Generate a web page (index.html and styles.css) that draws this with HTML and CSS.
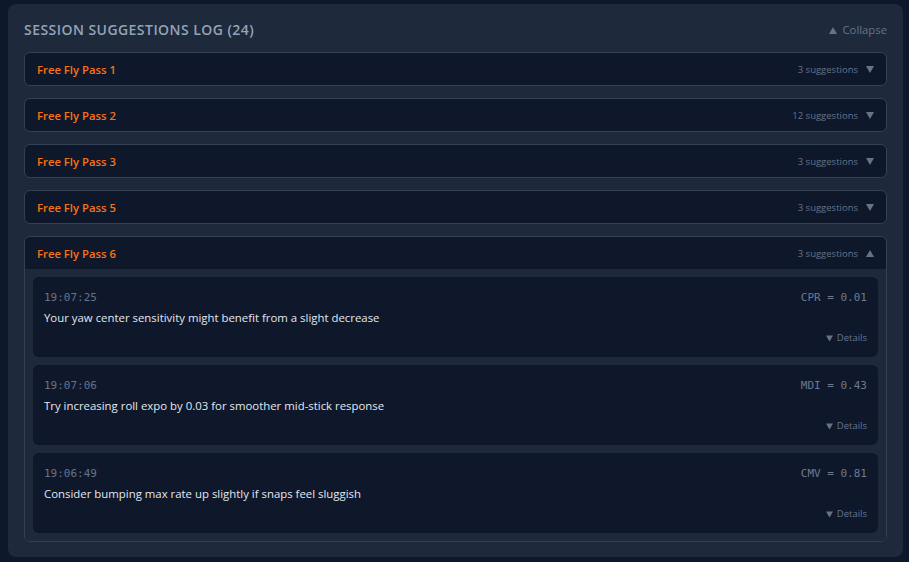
FILE: index.html
```html
<!DOCTYPE html>
<html>
<head>
<meta charset="utf-8">
<link rel="stylesheet" href="styles.css">
</head>
<body>
<div class="panel">
  <div class="panel-head">
    <h2 class="panel-title">SESSION SUGGESTIONS LOG (24)</h2>
    <button class="collapse-btn"><svg class="tri-up" viewBox="0 0 8 7"><path d="M4 0 L8 7 L0 7 Z"/></svg>Collapse</button>
  </div>
  <div class="groups">
    <div class="group">
      <div class="group-head"><span class="group-name">Free Fly Pass 1</span><span class="group-meta"><span class="count">3 suggestions</span><svg class="caret" viewBox="0 0 8 7"><path d="M0 0 L8 0 L4 7 Z"/></svg></span></div>
    </div>
    <div class="group">
      <div class="group-head"><span class="group-name">Free Fly Pass 2</span><span class="group-meta"><span class="count">12 suggestions</span><svg class="caret" viewBox="0 0 8 7"><path d="M0 0 L8 0 L4 7 Z"/></svg></span></div>
    </div>
    <div class="group">
      <div class="group-head"><span class="group-name">Free Fly Pass 3</span><span class="group-meta"><span class="count">3 suggestions</span><svg class="caret" viewBox="0 0 8 7"><path d="M0 0 L8 0 L4 7 Z"/></svg></span></div>
    </div>
    <div class="group">
      <div class="group-head"><span class="group-name">Free Fly Pass 5</span><span class="group-meta"><span class="count">3 suggestions</span><svg class="caret" viewBox="0 0 8 7"><path d="M0 0 L8 0 L4 7 Z"/></svg></span></div>
    </div>
    <div class="group open">
      <div class="group-head"><span class="group-name">Free Fly Pass 6</span><span class="group-meta"><span class="count">3 suggestions</span><svg class="caret" viewBox="0 0 8 7"><path d="M4 0 L8 7 L0 7 Z"/></svg></span></div>
      <div class="group-body">
        <div class="card">
          <div class="card-top"><span class="time">19:07:25</span><span class="metric">CPR = 0.01</span></div>
          <div class="card-text">Your yaw center sensitivity might benefit from a slight decrease</div>
          <div class="card-foot"><span class="details"><svg class="tri-down" viewBox="0 0 8 7"><path d="M0 0 L8 0 L4 7 Z"/></svg>Details</span></div>
        </div>
        <div class="card">
          <div class="card-top"><span class="time">19:07:06</span><span class="metric">MDI = 0.43</span></div>
          <div class="card-text">Try increasing roll expo by 0.03 for smoother mid-stick response</div>
          <div class="card-foot"><span class="details"><svg class="tri-down" viewBox="0 0 8 7"><path d="M0 0 L8 0 L4 7 Z"/></svg>Details</span></div>
        </div>
        <div class="card">
          <div class="card-top"><span class="time">19:06:49</span><span class="metric">CMV = 0.81</span></div>
          <div class="card-text">Consider bumping max rate up slightly if snaps feel sluggish</div>
          <div class="card-foot"><span class="details"><svg class="tri-down" viewBox="0 0 8 7"><path d="M0 0 L8 0 L4 7 Z"/></svg>Details</span></div>
        </div>
      </div>
    </div>
  </div>
</div>
</body>
</html>
```

FILE: styles.css
```css
* { box-sizing: border-box; }
html, body { margin: 0; padding: 0; }
body {
  background: #0f172a;
  font-family: "Open Sans", "Noto Sans", sans-serif;
  padding: 4px 6px 5px 8px;
}
.panel {
  background: #1e293b;
  border-radius: 8px;
  padding: 16px 16px 15px 16px;
}
.panel-head {
  display: flex;
  align-items: center;
  justify-content: space-between;
  height: 20px;
  margin-bottom: 12px;
}
.panel-title {
  margin: 0;
  font-size: 14px;
  font-weight: 600;
  letter-spacing: 0.45px;
  color: #94a3b8;
  line-height: 20px;
}
.collapse-btn {
  display: flex;
  align-items: center;
  gap: 5px;
  background: none;
  border: none;
  padding: 0;
  font-family: inherit;
  font-size: 11.3px;
  color: #64748b;
  line-height: 20px;
}
.tri-up {
  width: 8px;
  height: 7px;
  fill: #64748b;
}
.groups {
  display: flex;
  flex-direction: column;
  gap: 12px;
}
.group {
  border: 1px solid #334155;
  border-radius: 6px;
  background: #0f172a;
  overflow: hidden;
}
.group-head {
  display: flex;
  align-items: center;
  justify-content: space-between;
  height: 32px;
  padding: 0 12px;
}
.group-name {
  font-size: 11.3px;
  font-weight: 600;
  color: #f97316;
}
.group-meta {
  display: flex;
  align-items: center;
  gap: 8px;
}
.count {
  font-size: 9.5px;
  color: #64748b;
}
.caret {
  width: 8px;
  height: 7px;
  fill: #64748b;
}
.group-body {
  background: #1e293b;
  padding: 8px;
  display: flex;
  flex-direction: column;
  gap: 8px;
}
.card {
  background: #0f172a;
  border-radius: 6px;
  padding: 12px 11px 12px 11px;
  height: 80px;
}
.card-top {
  display: flex;
  justify-content: space-between;
  align-items: center;
  height: 16px;
}
.time, .metric {
  font-family: "DejaVu Sans Mono", monospace;
  font-size: 11px;
  color: #64748b;
}
.metric { color: #6b7a90; }
.card-text {
  margin-top: 4px;
  font-size: 11.4px;
  line-height: 18px;
  color: #e2e8f0;
}
.card-foot {
  display: flex;
  justify-content: flex-end;
  margin-top: 4px;
  line-height: 14px;
}
.details {
  display: flex;
  align-items: center;
  gap: 4px;
  font-size: 9.5px;
  color: #64748b;
}
.tri-down {
  width: 7px;
  height: 7px;
  fill: #64748b;
}
```
